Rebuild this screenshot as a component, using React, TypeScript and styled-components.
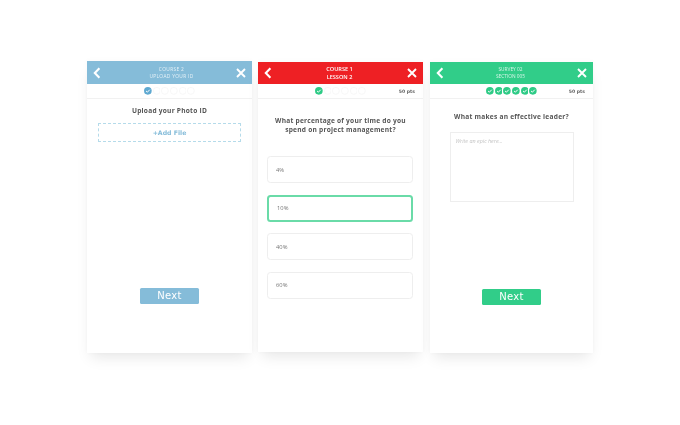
import React from "react";
import styled, { createGlobalStyle } from "styled-components";

const colors = {
  blue: "#85bcd9",
  red: "#ee2024",
  green: "#31cd89",
  text: "#555555",
  line: "#f1f1f1",
};

const GlobalStyle = createGlobalStyle`
  html, body {
    margin: 0;
    padding: 0;
    background: #fff;
    font-family: "DejaVu Sans", sans-serif;
  }
`;

const Page = styled.div`
  width: 680px;
  height: 425px;
  box-sizing: border-box;
  padding: 61px 0 0 87px;
  display: flex;
  align-items: flex-start;
  filter: blur(0.35px);
  overflow: hidden;
`;

const Panel = styled.section<{ $width: number; $height: number; $top: number; $gap: number }>`
  width: ${(props) => props.$width}px;
  height: ${(props) => props.$height}px;
  margin-top: ${(props) => props.$top}px;
  margin-right: ${(props) => props.$gap}px;
  flex: none;
  display: flex;
  flex-direction: column;
  background: #fff;
  box-shadow: 0 8px 14px -4px rgba(0, 0, 0, 0.1), 0 0 6px rgba(0, 0, 0, 0.035);
`;

const Header = styled.header<{ $color: string; $height: number }>`
  height: ${(props) => props.$height}px;
  flex: none;
  display: grid;
  grid-template-columns: 20px 1fr 22px;
  align-items: center;
  justify-items: center;
  background: ${(props) => props.$color};
  color: #fff;
`;

const HeaderTitle = styled.div<{ $strong?: boolean; $spacing?: number; $shift?: number }>`
  padding-left: ${(props) => props.$shift ?? 0}px;
  font-family: "Open Sans", sans-serif;
  font-size: ${(props) => (props.$strong ? 5.6 : 4.8)}px;
  font-weight: ${(props) => (props.$strong ? 600 : 400)};
  line-height: ${(props) => (props.$strong ? 8.5 : 7)}px;
  letter-spacing: ${(props) => props.$spacing ?? 0}px;
  text-align: center;
  text-transform: uppercase;
  opacity: ${(props) => (props.$strong ? 1 : 0.8)};
`;

const ProgressRow = styled.div`
  height: 15px;
  flex: none;
  box-sizing: border-box;
  padding: 0 8px;
  display: grid;
  grid-template-columns: 1fr auto 1fr;
  align-items: center;
  border-bottom: 1px solid ${colors.line};
`;

const Steps = styled.div`
  grid-column: 2;
  display: flex;
  gap: 1px;
`;

const Points = styled.span`
  grid-column: 3;
  justify-self: end;
  font-size: 4.6px;
  font-weight: 700;
  color: #666;
`;

const Body = styled.div<{ $top: number }>`
  flex: 1;
  display: flex;
  flex-direction: column;
  align-items: center;
  padding-top: ${(props) => props.$top}px;
`;

const Question = styled.h2<{ $bottom: number }>`
  margin: 0 0 ${(props) => props.$bottom}px;
  font-family: "Open Sans", sans-serif;
  font-size: 6.6px;
  font-weight: 700;
  line-height: 8.6px;
  letter-spacing: 0.24px;
  text-align: center;
  color: ${colors.text};
`;

const AddFile = styled.div`
  width: 143px;
  height: 19px;
  box-sizing: border-box;
  display: flex;
  align-items: center;
  justify-content: center;
  border: 1px dashed #b5dbea;
  font-size: 6.2px;
  font-weight: 700;
  color: ${colors.blue};
`;

const Options = styled.div`
  margin-right: 1px;
  display: flex;
  flex-direction: column;
  gap: 11.5px;
`;

const Option = styled.div<{ $selected?: boolean }>`
  width: 146px;
  height: 27px;
  box-sizing: border-box;
  padding-left: 8px;
  display: flex;
  align-items: center;
  border: ${(props) => (props.$selected ? "2px" : "1px")} solid
    ${(props) => (props.$selected ? "#6adba8" : "#eeeeee")};
  border-radius: 3.5px;
  font-family: "Open Sans", sans-serif;
  font-size: 5.8px;
  color: #777;
`;

const EssayBox = styled.div`
  width: 124px;
  height: 70px;
  box-sizing: border-box;
  padding: 4px 5px;
  border: 1px solid #eeeeee;
  font-family: "Open Sans", sans-serif;
  font-size: 5.4px;
  font-style: italic;
  color: #c4c4c4;
`;

const NextButton = styled.button<{ $color: string; $bottom: number }>`
  width: 59px;
  height: 16px;
  margin-top: auto;
  margin-bottom: ${(props) => props.$bottom}px;
  padding: 0;
  border: 0;
  border-radius: 1.5px;
  background: ${(props) => props.$color};
  color: #fff;
  font-family: "DejaVu Sans", sans-serif;
  font-size: 10px;
  font-weight: 400;
  line-height: 16px;
  letter-spacing: 0.3px;
`;

const Chevron = () => (
  <svg width="8" height="12" viewBox="0 0 8 12" aria-hidden="true">
    <path d="M6.4 1.2 1.8 6l4.6 4.8" fill="none" stroke="#fff" strokeWidth="2.1" />
  </svg>
);

const Close = () => (
  <svg width="10" height="10" viewBox="0 0 10 10" aria-hidden="true">
    <path d="M1 1l8 8M9 1 1 9" fill="none" stroke="#fff" strokeWidth="1.9" />
  </svg>
);

const Step: React.FC<{ color?: string }> = ({ color }) => (
  <svg width="7.7" height="7.7" viewBox="0 0 8 8" aria-hidden="true">
    {color ? (
      <>
        <circle cx="4" cy="4" r="4" fill={color} />
        <path d="M2.1 4.1 3.5 5.4 6 2.8" fill="none" stroke="#fff" strokeWidth="1" />
      </>
    ) : (
      <circle cx="4" cy="4" r="3.6" fill="none" stroke="#f3f3f3" strokeWidth="0.7" />
    )}
  </svg>
);

const Progress: React.FC<{ done: number; color: string; points?: boolean }> = ({
  done,
  color,
  points,
}) => (
  <ProgressRow>
    <Steps>
      {[0, 1, 2, 3, 4, 5].map((i) => (
        <Step key={i} color={i < done ? color : undefined} />
      ))}
    </Steps>
    {points && <Points>50 pts</Points>}
  </ProgressRow>
);

const App: React.FC = () => (
  <>
    <GlobalStyle />
    <Page>
      <Panel $width={165} $height={292} $top={0} $gap={6}>
        <Header $color={colors.blue} $height={23}>
          <Chevron />
          <HeaderTitle $spacing={0.35} $shift={6}>
            Course 2
            <br />
            Upload your ID
          </HeaderTitle>
          <Close />
        </Header>
        <Progress done={1} color="#5fa9d1" />
        <Body $top={8}>
          <Question $bottom={7}>Upload your Photo ID</Question>
          <AddFile>+Add File</AddFile>
          <NextButton $color={colors.blue} $bottom={49}>
            Next
          </NextButton>
        </Body>
      </Panel>
      <Panel $width={165} $height={290} $top={1} $gap={7}>
        <Header $color={colors.red} $height={22}>
          <Chevron />
          <HeaderTitle $strong>
            Course 1
            <br />
            Lesson 2
          </HeaderTitle>
          <Close />
        </Header>
        <Progress done={1} color="#2ecb86" points />
        <Body $top={18}>
          <Question $bottom={22}>
            What percentage of your time do you
            <br />
            spend on project management?
          </Question>
          <Options>
            <Option>4%</Option>
            <Option $selected>10%</Option>
            <Option>40%</Option>
            <Option>60%</Option>
          </Options>
        </Body>
      </Panel>
      <Panel $width={163} $height={291} $top={1} $gap={0}>
        <Header $color={colors.green} $height={22}>
          <Chevron />
          <HeaderTitle>
            Survey 02
            <br />
            Section 005
          </HeaderTitle>
          <Close />
        </Header>
        <Progress done={6} color="#2ecb86" points />
        <Body $top={14}>
          <Question $bottom={10}>What makes an effective leader?</Question>
          <EssayBox>Write an epic here...</EssayBox>
          <NextButton $color={colors.green} $bottom={48}>
            Next
          </NextButton>
        </Body>
      </Panel>
    </Page>
  </>
);

export default App;
